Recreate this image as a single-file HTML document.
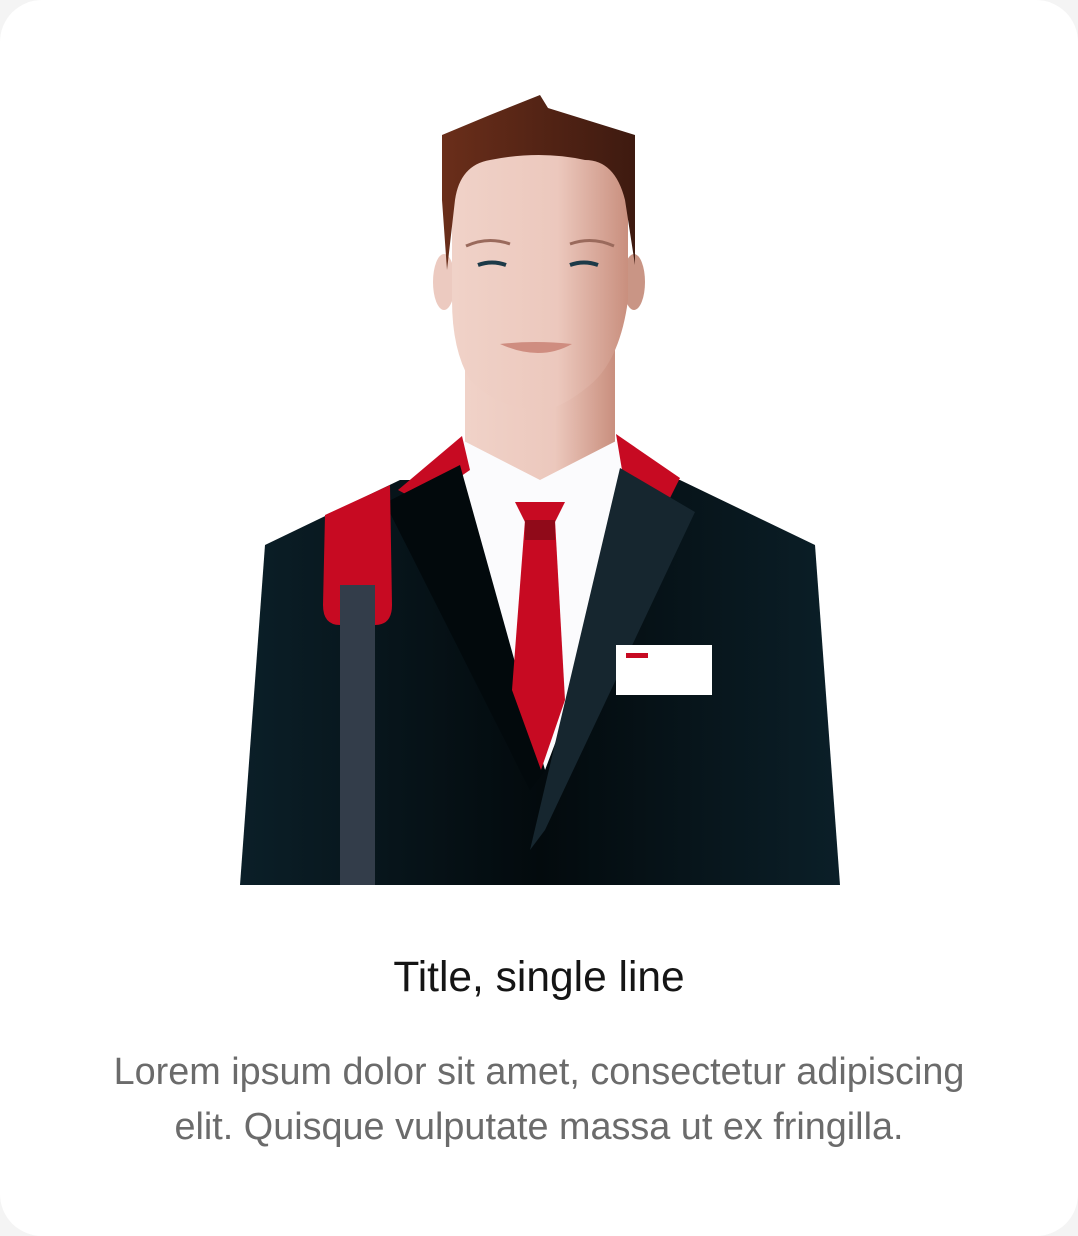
<!DOCTYPE html>
<html><head><style>
html,body{margin:0;padding:0;background:#f4f4f4;}
.card{position:absolute;left:0;top:0;width:1078px;height:1236px;background:#fff;border-radius:42px;overflow:hidden;}
svg{position:absolute;left:0;top:0;}
.t{position:absolute;left:0;width:1078px;text-align:center;font-family:"Liberation Sans",sans-serif;}
.title{top:954px;font-size:42.5px;color:#151515;}
.body{top:1045px;font-size:37.8px;line-height:55px;color:#6b6b6b;}
</style></head><body>
<div class="card">
<svg width="1078" height="900" viewBox="0 0 1078 900">
<defs>
<linearGradient id="hair" x1="0" y1="0" x2="1" y2="0"><stop offset="0" stop-color="#6a2e1a"/><stop offset="1" stop-color="#3e1a10"/></linearGradient>
<linearGradient id="skin" x1="0" y1="0" x2="1" y2="0"><stop offset="0" stop-color="#f0d2c8"/><stop offset="0.6" stop-color="#ecc8bd"/><stop offset="1" stop-color="#c98f7e"/></linearGradient>
<linearGradient id="jk" x1="0" y1="0" x2="1" y2="0"><stop offset="0" stop-color="#0b1f28"/><stop offset="0.5" stop-color="#030a0d"/><stop offset="1" stop-color="#0b1f28"/></linearGradient>
</defs>
<path d="M465 340 L615 340 L615 470 L540 500 L465 470 Z" fill="url(#skin)"/>
<path d="M265 545 L400 480 L680 480 L815 545 L840 885 L240 885 Z" fill="url(#jk)"/>
<path d="M462 440 L540 480 L618 440 L640 520 L545 770 L440 520 Z" fill="#fbfbfd"/>
<path d="M398 490 L462 436 L470 470 L422 503 Z" fill="#c70a22"/>
<path d="M616 434 L680 478 L668 502 L622 470 Z" fill="#c70a22"/>
<path d="M385 503 L460 465 L545 770 L530 790 Z" fill="#02090c"/>
<path d="M695 512 L620 468 L530 850 L545 830 Z" fill="#16262f"/>
<path d="M515 502 L565 502 L555 522 L525 522 Z" fill="#c70a22"/>
<path d="M525 520 L555 520 L565 700 L541 770 L512 690 Z" fill="#c70a22"/>
<rect x="525" y="520" width="30" height="20" fill="#6a0a14" opacity="0.6"/>
<rect x="616" y="645" width="96" height="50" fill="#fff"/>
<rect x="626" y="653" width="22" height="5" fill="#c70a22"/>
<path d="M325 515 L390 485 L392 605 Q392 625 375 625 L340 625 Q323 625 323 605 Z" fill="#c70a22"/>
<rect x="340" y="585" width="35" height="300" fill="#333d4a"/>
<ellipse cx="444" cy="282" rx="11" ry="28" fill="#eccac0"/>
<ellipse cx="634" cy="282" rx="11" ry="28" fill="#c99585"/>
<path d="M452 180 Q452 140 540 140 Q628 140 628 180 L628 300 Q620 360 590 385 Q560 410 540 410 Q500 410 470 380 Q452 350 452 300 Z" fill="url(#skin)"/>
<path d="M442 135 L490 115 L540 95 L548 108 L635 135 L635 265 L625 200 Q615 160 585 160 Q540 150 490 160 Q460 165 455 200 L447 270 L442 200 Z" fill="url(#hair)"/>
<path d="M466 246 Q488 236 510 244" stroke="#9a6a5c" stroke-width="3" fill="none"/>
<path d="M570 244 Q592 236 614 246" stroke="#9a6a5c" stroke-width="3" fill="none"/>
<path d="M478 265 Q492 260 506 265" stroke="#1c3a48" stroke-width="4" fill="none"/>
<path d="M570 265 Q584 260 598 265" stroke="#1c3a48" stroke-width="4" fill="none"/>
<path d="M500 344 Q535 340 572 344 Q540 362 500 344 Z" fill="#cf8d80"/>
</svg>
<div class="t title">Title, single line</div>
<div class="t body">Lorem ipsum dolor sit amet, consectetur adipiscing<br>elit. Quisque vulputate massa ut ex fringilla.</div>
</div>
</body></html>
